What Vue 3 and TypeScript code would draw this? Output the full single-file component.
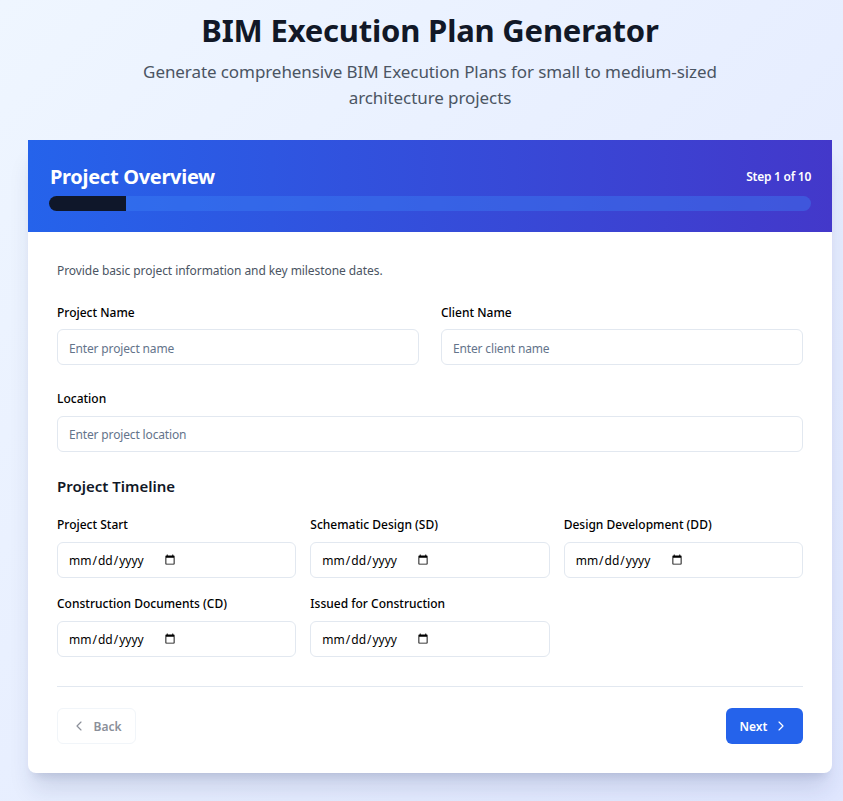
<template>
	<div class="page">
		<header class="intro">
			<h1>BIM Execution Plan Generator</h1>
			<p>Generate comprehensive BIM Execution Plans for small to medium-sized architecture projects</p>
		</header>

		<main class="card">
			<div class="card-head">
				<div class="head-row">
					<h2>Project Overview</h2>
					<span class="step">Step {{ step }} of {{ total }}</span>
				</div>
				<div class="progress">
					<div class="progress-fill" :style="{ width: (step / total) * 100 + '%' }"></div>
				</div>
			</div>

			<form class="card-body" @submit.prevent>
				<p class="lead">Provide basic project information and key milestone dates.</p>

				<div class="grid-two">
					<div class="field">
						<label for="project-name">Project Name</label>
						<input id="project-name" type="text" placeholder="Enter project name" />
					</div>
					<div class="field">
						<label for="client-name">Client Name</label>
						<input id="client-name" type="text" placeholder="Enter client name" />
					</div>
				</div>

				<div class="field location">
					<label for="location">Location</label>
					<input id="location" type="text" placeholder="Enter project location" />
				</div>

				<h3>Project Timeline</h3>

				<div class="grid-three">
					<div v-for="d in dates" :key="d.id" class="field">
						<label :for="d.id">{{ d.label }}</label>
						<input :id="d.id" type="date" />
					</div>
				</div>

				<div class="actions">
					<button type="button" class="btn back" disabled>
						<svg viewBox="0 0 24 24" width="16" height="16"><path d="m15 18-6-6 6-6" /></svg>
						Back
					</button>
					<button type="submit" class="btn next">
						Next
						<svg viewBox="0 0 24 24" width="16" height="16"><path d="m9 18 6-6-6-6" /></svg>
					</button>
				</div>
			</form>
		</main>
	</div>
</template>

<script setup lang="ts">
const step = 1
const total = 10

const dates = [
	{ id: 'start', label: 'Project Start' },
	{ id: 'sd', label: 'Schematic Design (SD)' },
	{ id: 'dd', label: 'Design Development (DD)' },
	{ id: 'cd', label: 'Construction Documents (CD)' },
	{ id: 'ifc', label: 'Issued for Construction' }
]
</script>

<style>
html,
body {
	margin: 0;
	background: #fff;
}
</style>

<style scoped>
.page {
	box-sizing: border-box;
	height: 801px;
	overflow: hidden;
	padding: 0 11px 0 28px;
	background: linear-gradient(135deg, #eff6ff, #e0e7ff);
	font-family: 'Noto Sans', 'Open Sans', sans-serif;
	color: #000;
}

.intro {
	text-align: center;
	padding: 8px 96px 0;
	height: 140px;
	box-sizing: border-box;
}

.intro h1 {
	margin: 0 -60px;
	font-size: 31px;
	line-height: 44px;
	font-weight: 700;
	letter-spacing: -0.2px;
	color: #111827;
}

.intro p {
	margin: 7px 0 0;
	font-size: 17px;
	line-height: 26px;
	letter-spacing: -0.08px;
	color: #4b5563;
}

.card {
	background: #fff;
	border-radius: 0 0 8px 8px;
	box-shadow: 0 20px 25px -5px rgba(30, 41, 90, 0.14), 0 8px 10px -6px rgba(30, 41, 90, 0.14);
}

.card-head {
	height: 92px;
	box-sizing: border-box;
	padding: 22px 21px 0;
	background: linear-gradient(90deg, #2563eb, #4338ca);
	color: #fff;
}

.head-row {
	display: flex;
	justify-content: space-between;
	align-items: flex-start;
	height: 34px;
}

.card-head h2 {
	margin: 0 0 0 1px;
	font-size: 20px;
	line-height: 30px;
	font-weight: 700;
	letter-spacing: -0.3px;
}

.step {
	font-size: 12px;
	line-height: 30px;
	font-weight: 600;
	letter-spacing: -0.25px;
}

.progress {
	height: 15px;
	border-radius: 8px;
	background: rgba(59, 130, 246, 0.4);
	overflow: hidden;
}

.progress-fill {
	height: 100%;
	min-width: 77px;
	background: #0f172a;
}

.card-body {
	padding: 30px 29px 29px;
}

.lead {
	margin: 0 0 24px;
	font-size: 12px;
	line-height: 18px;
	letter-spacing: -0.07px;
	color: #4b5563;
}

.grid-two {
	display: grid;
	grid-template-columns: 1fr 1fr;
	gap: 22px;
}

.grid-two label {
	margin-bottom: 7px;
}

.grid-two input {
	padding-top: 3px;
}

.location {
	margin-top: 25px;
}

.field label {
	display: block;
	font-size: 12px;
	line-height: 18px;
	font-weight: 500;
}

.location label,
.grid-three label {
	margin-bottom: 8px;
}

.field input {
	display: block;
	box-sizing: border-box;
	width: 100%;
	height: 36px;
	padding-left: 11px;
	padding-right: 11px;
	border: 1px solid #e2e8f0;
	border-radius: 6px;
	background: #fff;
	font-family: inherit;
	font-size: 12px;
	color: #000;
	outline: none;
}

.field input::placeholder {
	color: #64748b;
	letter-spacing: -0.15px;
}

.field input[type='date'] {
	padding-left: 10px;
}

.field input[type='date']::-webkit-datetime-edit {
	flex: 0 0 auto;
}

h3 {
	margin: 23px 0 19px;
	font-size: 15px;
	line-height: 22px;
	font-weight: 600;
	color: #111827;
}

.grid-three {
	display: grid;
	grid-template-columns: repeat(3, 1fr);
	gap: 17px 14px;
}

.actions {
	display: flex;
	justify-content: space-between;
	margin-top: 29px;
	padding-top: 21px;
	border-top: 1px solid #e2e8f0;
}

.btn {
	display: inline-flex;
	align-items: center;
	justify-content: center;
	height: 36px;
	border-radius: 6px;
	font-family: inherit;
	font-size: 12px;
	font-weight: 600;
	cursor: pointer;
}

.btn svg {
	fill: none;
	stroke: currentColor;
	stroke-width: 1.75;
	stroke-linecap: round;
	stroke-linejoin: round;
}

.back {
	width: 79px;
	gap: 6px;
	border: 1px solid #f1f5f9;
	background: #fff;
	color: #8b8f99;
}

.next {
	width: 77px;
	gap: 6px;
	border: none;
	background: #2563eb;
	color: #fff;
}
</style>
